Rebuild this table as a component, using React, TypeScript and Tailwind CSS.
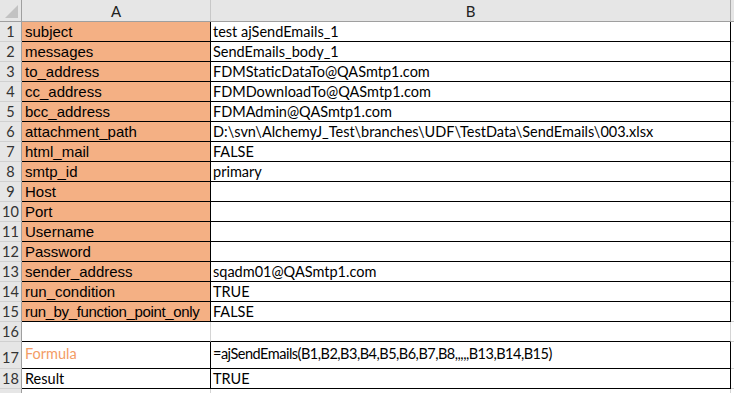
import React from "react";

type Kind = "orange" | "empty" | "formula" | "result" | "tail";
type Row = { n: number; a: string; b: string; kind: Kind };

const rows: Row[] = [
  { n: 1, a: "subject", b: "test ajSendEmails_1", kind: "orange" },
  { n: 2, a: "messages", b: "SendEmails_body_1", kind: "orange" },
  { n: 3, a: "to_address", b: "FDMStaticDataTo@QASmtp1.com", kind: "orange" },
  { n: 4, a: "cc_address", b: "FDMDownloadTo@QASmtp1.com", kind: "orange" },
  { n: 5, a: "bcc_address", b: "FDMAdmin@QASmtp1.com", kind: "orange" },
  { n: 6, a: "attachment_path", b: "D:\\svn\\AlchemyJ_Test\\branches\\UDF\\TestData\\SendEmails\\003.xlsx", kind: "orange" },
  { n: 7, a: "html_mail", b: "FALSE", kind: "orange" },
  { n: 8, a: "smtp_id", b: "primary", kind: "orange" },
  { n: 9, a: "Host", b: "", kind: "orange" },
  { n: 10, a: "Port", b: "", kind: "orange" },
  { n: 11, a: "Username", b: "", kind: "orange" },
  { n: 12, a: "Password", b: "", kind: "orange" },
  { n: 13, a: "sender_address", b: "sqadm01@QASmtp1.com", kind: "orange" },
  { n: 14, a: "run_condition", b: "TRUE", kind: "orange" },
  { n: 15, a: "run_by_function_point_only", b: "FALSE", kind: "orange" },
  { n: 16, a: "", b: "", kind: "empty" },
  { n: 17, a: "Formula", b: "=ajSendEmails(B1,B2,B3,B4,B5,B6,B7,B8,,,,,B13,B14,B15)", kind: "formula" },
  { n: 18, a: "Result", b: "TRUE", kind: "result" },
  { n: 19, a: "", b: "", kind: "tail" },
];

const calibri = "font-['Lato','Open_Sans',sans-serif]";
const arial = "font-['Liberation_Sans',Arial,sans-serif]";

export default function App() {
  return (
    <div className="w-[734px] h-[393px] overflow-hidden bg-white text-black">
      {/* Column header */}
      <div className="flex h-[22px] bg-[#e6e6e6] border-b border-[#9f9f9f]">
        <div className="relative w-[22px] shrink-0 border-r border-[#9f9f9f]">
          <div className="absolute right-[3px] bottom-[3px] w-0 h-0 border-l-[13px] border-l-transparent border-b-[13px] border-b-[#c2c2c2]" />
        </div>
        <div className={`w-[189px] shrink-0 border-r border-[#c8c8c8] flex items-center justify-center text-[15px] leading-[18px] text-[#222] ${calibri}`}>A</div>
        <div className={`w-[520px] shrink-0 border-r border-[#ababab] flex items-center justify-center text-[15px] leading-[18px] text-[#222] ${calibri}`}>B</div>
        <div className="flex-1" />
      </div>

      {rows.map((r) => {
        const blackSides = r.kind === "orange" || r.kind === "formula" || r.kind === "result";
        const blackBottom = r.kind !== "tail";
        return (
          <div key={r.n} className={`flex ${r.kind === "formula" ? "h-[27px]" : "h-[20px]"}`}>
            <div
              className={`w-[22px] shrink-0 bg-[#e6e6e6] border-r border-r-[#9f9f9f] border-b border-b-[#d0d0d0] flex justify-center text-[14.5px] leading-[18px] text-[#333] ${calibri} ${
                r.kind === "formula" ? "items-end pb-[1px]" : "items-center"
              }`}
            >
              {r.kind === "tail" ? "" : r.n}
            </div>
            <div
              className={`w-[189px] shrink-0 border-r border-b flex items-center pl-[3px] whitespace-nowrap overflow-hidden ${
                r.kind === "orange" ? "bg-[#f4b084]" : "bg-white"
              } ${blackSides ? "border-r-black" : "border-r-[#d4d4d4]"} ${blackBottom ? "border-b-black" : "border-b-[#d4d4d4]"}`}
            >
              {r.kind === "orange" && (
                <span
                  className={`text-[15px] leading-[18px] pt-[1px] ${arial} ${
                    r.n === 15 ? "tracking-[-0.35px]" : ""
                  }`}
                >
                  {r.a}
                </span>
              )}
              {r.kind === "formula" && (
                <span className={`text-[14.5px] leading-[18px] text-[#f39c65] pb-[3px] ${calibri}`}>{r.a}</span>
              )}
              {r.kind === "result" && (
                <span className={`text-[14.5px] leading-[18px] ${calibri}`}>{r.a}</span>
              )}
            </div>
            <div
              className={`w-[520px] shrink-0 border-r border-b flex items-center pl-[2px] whitespace-nowrap overflow-hidden bg-white ${
                blackSides ? "border-r-black" : "border-r-[#d4d4d4]"
              } ${blackBottom ? "border-b-black" : "border-b-[#d4d4d4]"}`}
            >
              {r.kind === "formula" ? (
                <span className={`text-[14.5px] leading-[18px] tracking-[-0.5px] pb-[3px] ${calibri}`}>{r.b}</span>
              ) : (
                <span className={`text-[14.5px] leading-[18px] ${calibri}`}>{r.b}</span>
              )}
            </div>
            <div className="flex-1 border-b border-[#d4d4d4]" />
          </div>
        );
      })}
    </div>
  );
}
